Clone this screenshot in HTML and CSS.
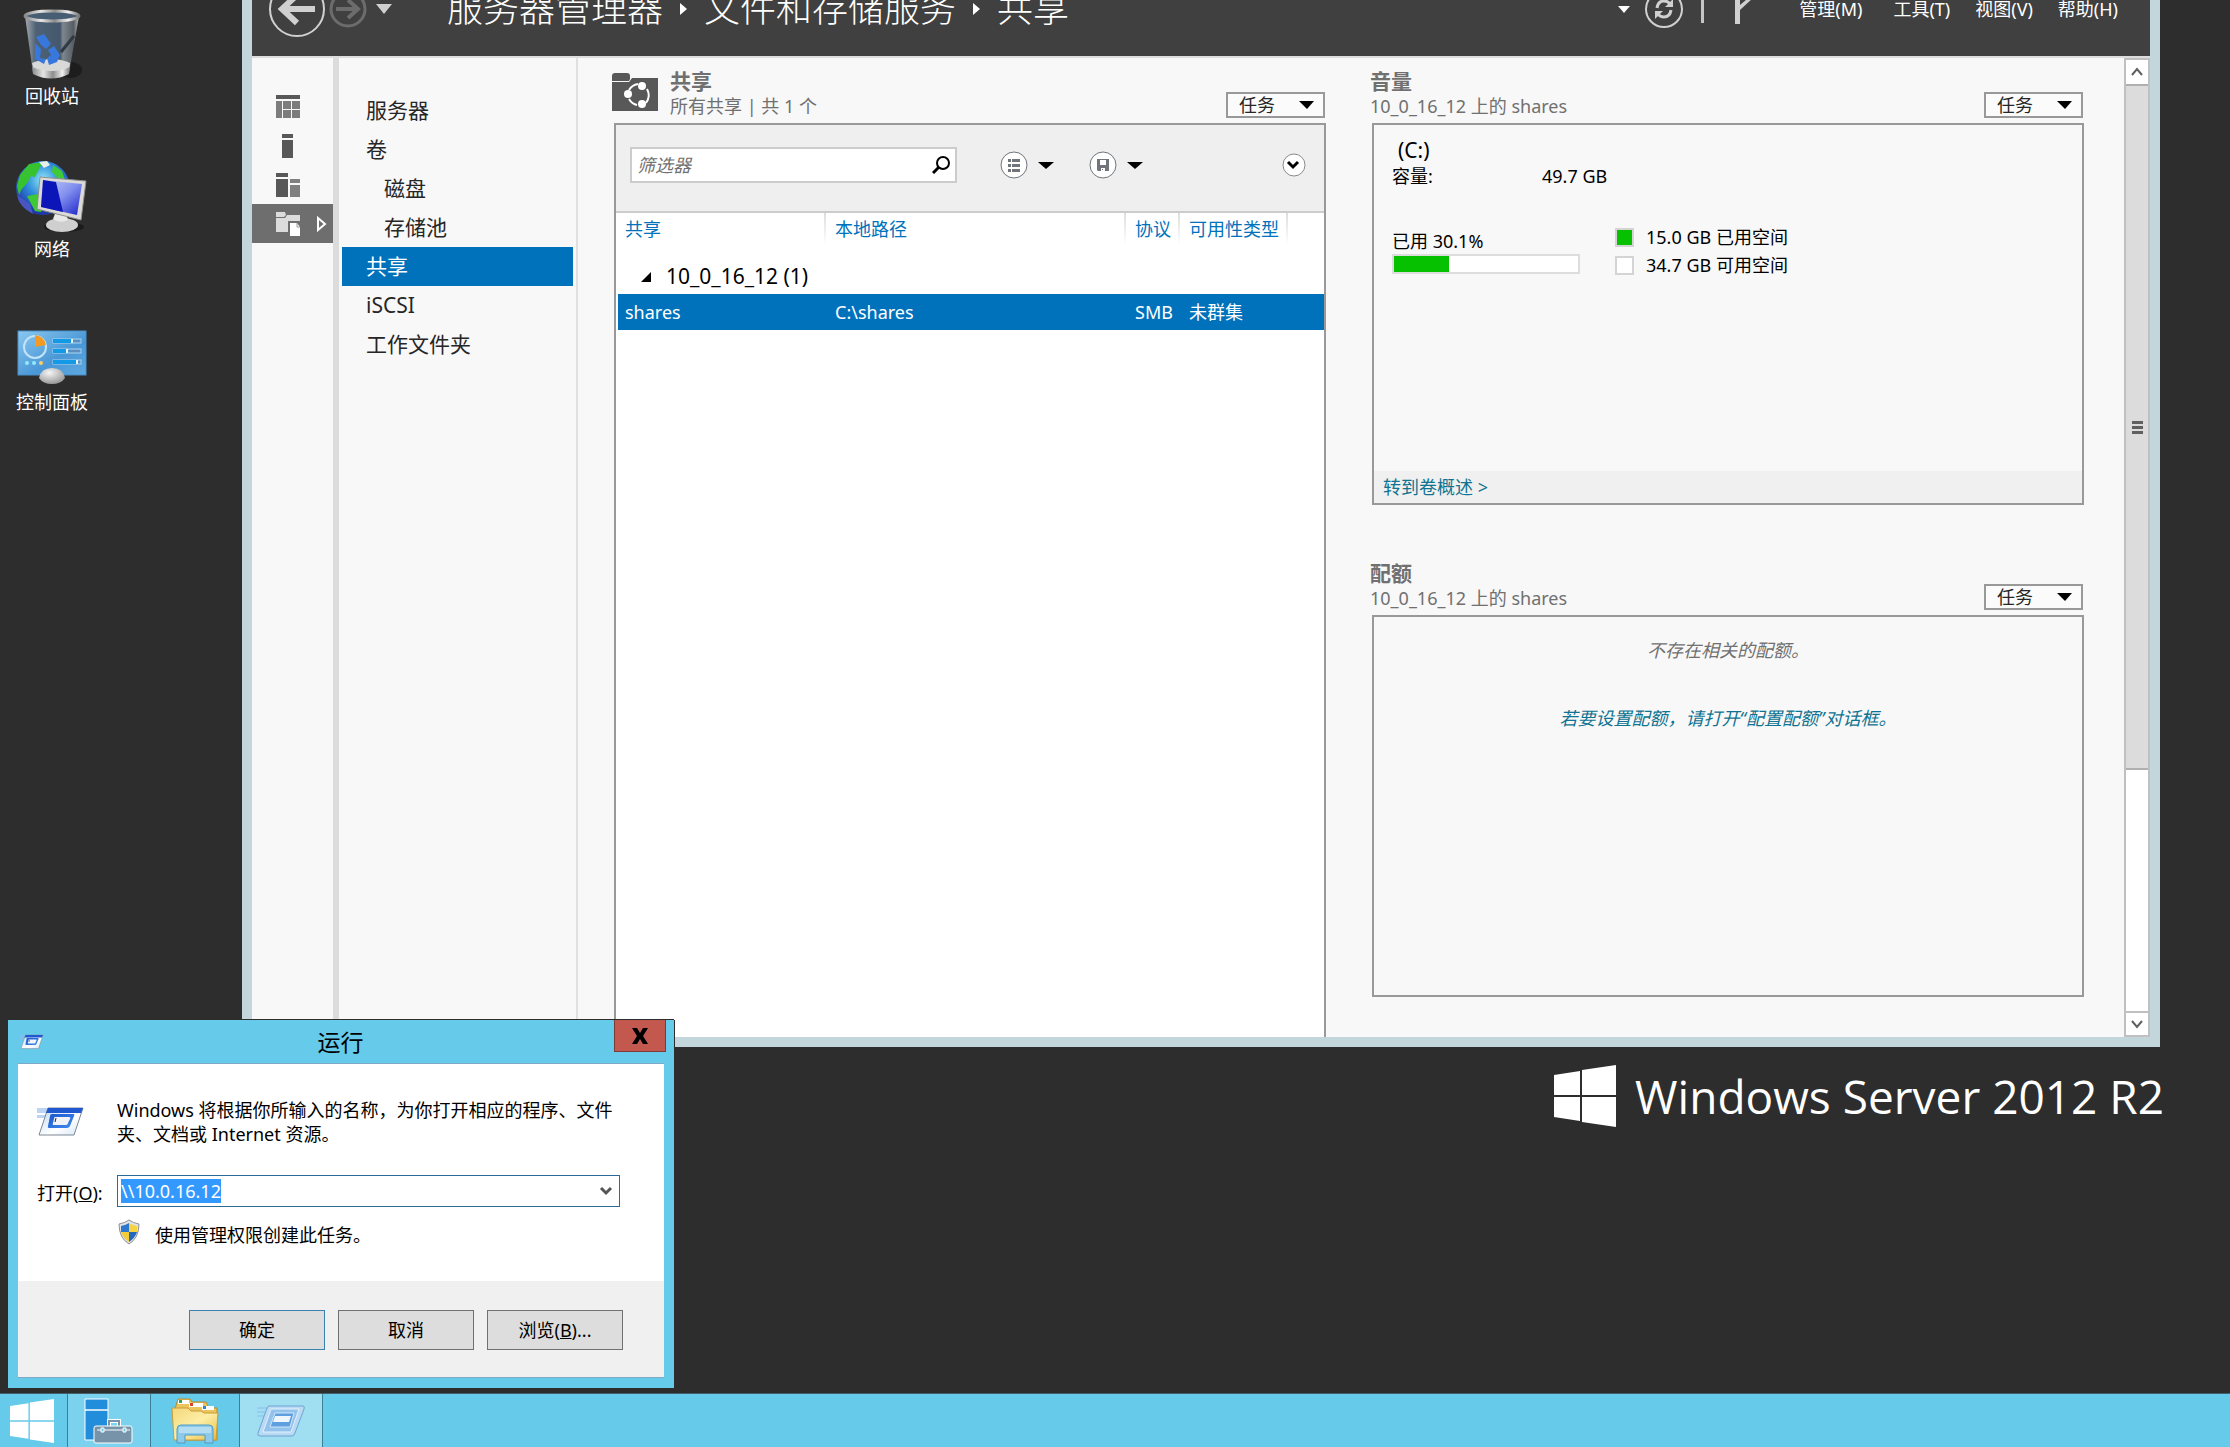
FILE: index.html
```html
<!DOCTYPE html>
<html lang="zh-CN">
<head>
    <meta charset="UTF-8">
    <meta name="viewport" content="width=device-width, initial-scale=1.0">
    <title>服务器管理器</title>
    <link rel="stylesheet" href="styles.css">
</head>
<body>
    <!-- Icons that are used more than once -->
    <svg class="defs" width="0" height="0">
        <defs>
            <linearGradient id="runBlue" x1="0" y1="0" x2="1" y2="1">
                <stop offset="0" stop-color="#1c56cc"/>
                <stop offset="1" stop-color="#3f8df0"/>
            </linearGradient>
            <linearGradient id="runPaper" x1="0" y1="0" x2="1" y2="1">
                <stop offset="0" stop-color="#b9d8f5"/>
                <stop offset="0.6" stop-color="#ffffff"/>
                <stop offset="1" stop-color="#cfe3f5"/>
            </linearGradient>
        </defs>
        <symbol id="icon-run" viewBox="0 0 48 30">
            <path d="M0 1h14l-2 5H0zM0 8h10l-1 3H0z" fill="#8fb9ec" opacity="0.6"/>
            <path d="M11 1h35l-9 27H2z" fill="url(#runPaper)" stroke="#7d8894" stroke-width="1"/>
            <path d="M11 1h35l-2 5H9z" fill="#2059cf"/>
            <path d="M15 7h21q2 0 1 2l-4 10q-1 2-3 2H13q-3 0-2-2l2-10q0-2 2-2z" fill="url(#runBlue)"/>
            <path d="M18 10h14q2 0 1 2l-2 4q0 2-2 2H17q-2 0-1-2l1-4q0-2 1-2z" fill="#f1f3f8"/>
            <path d="M19 11l-1 4" stroke="#222" stroke-width="1"/>
        </symbol>
        <symbol id="icon-flag" viewBox="0 0 62 62">
            <path d="M0 10L26 6v24H0zM28 5L62 0v30H28zM0 32h26v24L0 52zM28 32h34v30L28 57z"/>
        </symbol>
    </svg>

    <main class="desktop">
        <div class="shortcuts">
            <a href="#" class="shortcut">
                <svg width="64" height="72" viewBox="0 0 64 72">
                    <defs>
                        <linearGradient id="glass" x1="0" x2="1">
                            <stop offset="0" stop-color="#a5abb0"/>
                            <stop offset="0.2" stop-color="#4f6275"/>
                            <stop offset="0.65" stop-color="#44586d"/>
                            <stop offset="0.7" stop-color="#7e868e"/>
                            <stop offset="0.9" stop-color="#565d63"/>
                            <stop offset="1" stop-color="#b6b9bc"/>
                        </linearGradient>
                        <linearGradient id="metal" x1="0" x2="1">
                            <stop offset="0" stop-color="#8a8a8a"/>
                            <stop offset="0.3" stop-color="#e6e6e6"/>
                            <stop offset="0.55" stop-color="#8d8d8d"/>
                            <stop offset="0.8" stop-color="#f0f0f0"/>
                            <stop offset="1" stop-color="#777"/>
                        </linearGradient>
                    </defs>
                    <ellipse cx="50" cy="62" rx="12" ry="8" fill="#1d1d1d"/>
                    <path d="M5 8L13 65q18 9 36 0L59 8z" fill="url(#glass)"/>
                    <path d="M12 55q20-8 38 0l-1 8q-18 8-35 0z" fill="#d9d9d7"/>
                    <path d="M12 59l1 7q18 9 36 0l1-7q-18 8-38 0z" fill="url(#metal)"/>
                    <path d="M54 28L41 44" stroke="#313a44" stroke-width="3"/>
                    <path d="M16 29l8-3 7 10-5 5-5-4zM15 35l6 6-1 9 6 1-2 5-9-5zM28 42l6-4 6 9-3 7-8 3-2-7 4-3z" fill="#3878dd"/>
                    <ellipse cx="32" cy="8" rx="27" ry="5" fill="#465d73" stroke="url(#metal)" stroke-width="3"/>
                </svg>
                <span>回收站</span>
            </a>
            <a href="#" class="shortcut">
                <svg width="74" height="76" viewBox="0 0 74 76">
                    <defs>
                        <radialGradient id="globe" cx="0.5" cy="0.35" r="0.6">
                            <stop offset="0" stop-color="#8fe8f5"/>
                            <stop offset="0.5" stop-color="#2f8ddb"/>
                            <stop offset="1" stop-color="#1f3aa6"/>
                        </radialGradient>
                        <linearGradient id="screen" x1="0" y1="0" x2="1" y2="1">
                            <stop offset="0" stop-color="#c9d2fa"/>
                            <stop offset="0.5" stop-color="#8290ee"/>
                            <stop offset="1" stop-color="#1a22c8"/>
                        </linearGradient>
                    </defs>
                    <circle cx="28" cy="31" r="27" fill="url(#globe)"/>
                    <path d="M5 18l9-11 14-2-4 7-4 8-4-1-3 6-7 8-2 5-2-9z" fill="#37c22f"/>
                    <path d="M38 8l9 6 4 12-7-1-3-6-4-4zM12 39l11-2 5 8-2 10-6-1z" fill="#3fc935"/>
                    <path d="M24 5l8-1 3 4-6 3z" fill="#e8efe8"/>
                    <path d="M2 38q2 12 16 19l-3-10z" fill="#4a55c4"/>
                    <ellipse cx="49" cy="70" rx="20" ry="5" fill="#1b1b1b"/>
                    <ellipse cx="47" cy="68" rx="16" ry="7" fill="#cfcfcf"/>
                    <path d="M38 62l3-8 10 2 2 7q-8 4-15-1z" fill="#e8e8e8"/>
                    <path d="M25 20l46 4-5 39-44-11z" fill="#dcdad6" stroke="#8f8f8f" stroke-width="1"/>
                    <path d="M28 23l39 4-5 31-36-8z" fill="url(#screen)"/>
                    <path d="M28 23l13 2 7 30-22-5z" fill="#0c16b8"/>
                </svg>
                <span>网络</span>
            </a>
            <a href="#" class="shortcut">
                <svg width="70" height="56" viewBox="0 0 70 56">
                    <defs>
                        <linearGradient id="panelBlue" x1="0" y1="0" x2="1" y2="1">
                            <stop offset="0" stop-color="#8ac8f0"/>
                            <stop offset="0.6" stop-color="#4a97d6"/>
                            <stop offset="1" stop-color="#5ea9e0"/>
                        </linearGradient>
                        <radialGradient id="ball" cx="0.4" cy="0.3" r="0.8">
                            <stop offset="0" stop-color="#f6f6f6"/>
                            <stop offset="1" stop-color="#8b8b8b"/>
                        </radialGradient>
                    </defs>
                    <rect x="1" y="1" width="68" height="44" fill="url(#panelBlue)" stroke="#4a8fc7" stroke-width="1"/>
                    <circle cx="18" cy="17" r="11" fill="none" stroke="#c3e4f8" stroke-width="2"/>
                    <path d="M18 17V5a12 12 0 0 1 11 10z" fill="#f39a23"/>
                    <g fill="#5b8fc0" stroke="#a9d4f2" stroke-width="1">
                        <rect x="36" y="9" width="28" height="4"/>
                        <rect x="36" y="19" width="28" height="4"/>
                        <rect x="36" y="30" width="28" height="4"/>
                    </g>
                    <path d="M36 9h18v4H36zM36 19h13v4H36zM36 30h23v4H36z" fill="#139ae6"/>
                    <path d="M54 9h2v4h-2zM49 19h2v4h-2zM59 30h2v4h-2z" fill="#e8f5fd"/>
                    <circle cx="10" cy="33" r="2" fill="#8eeaff"/>
                    <circle cx="17" cy="33" r="2" fill="#8eeaff"/>
                    <circle cx="24" cy="33" r="2" fill="#ffcc66"/>
                    <path d="M22 48q2-10 13-10t13 10q-4 6-13 6t-13-6z" fill="url(#ball)"/>
                </svg>
                <span>控制面板</span>
            </a>
        </div>

        <div class="brand">
            <svg width="62" height="62" fill="#fff"><use href="#icon-flag"/></svg>
            <span>Windows Server 2012 R2</span>
        </div>

        <!-- Server Manager -->
        <section class="server-manager">
            <header class="topbar">
                <button class="icon-btn back" aria-label="后退">
                    <svg width="56" height="56" viewBox="0 0 56 56" fill="none" stroke="#d0d0d0">
                        <circle cx="28" cy="28" r="27" stroke-width="2"/>
                        <path d="M46 28H14M28 14L13 28l15 14" stroke-width="6"/>
                    </svg>
                </button>
                <button class="icon-btn forward" aria-label="前进">
                    <svg width="38" height="38" viewBox="0 0 38 38" fill="none" stroke="#6c6c6c">
                        <circle cx="19" cy="19" r="17" stroke-width="3"/>
                        <path d="M7 19h22M19 10l10 9-10 9" stroke-width="4"/>
                    </svg>
                </button>
                <button class="icon-btn" aria-label="历史记录">
                    <svg width="16" height="10" viewBox="0 0 16 10" fill="#d0d0d0"><path d="M0 0h16L8 10z"/></svg>
                </button>
                <nav class="breadcrumb">
                    <span>服务器管理器</span>
                    <svg width="7" height="12" viewBox="0 0 7 12" fill="#fff"><path d="M0 0l7 6-7 6z"/></svg>
                    <span>文件和存储服务</span>
                    <svg width="7" height="12" viewBox="0 0 7 12" fill="#fff"><path d="M0 0l7 6-7 6z"/></svg>
                    <span>共享</span>
                </nav>
                <div class="topbar-tools">
                    <button class="icon-btn" aria-label="更多">
                        <svg width="12" height="7" viewBox="0 0 12 7" fill="#fff"><path d="M0 0h12L6 7z"/></svg>
                    </button>
                    <button class="icon-btn refresh" aria-label="刷新">
                        <svg width="38" height="38" viewBox="0 0 38 38" fill="none" stroke="#d0d0d0">
                            <circle cx="19" cy="19" r="18" stroke-width="2"/>
                            <path d="M12 18q1-7 7-7 4 0 6 3M26 20q-1 7-7 7-4 0-6-3" stroke-width="3"/>
                            <path d="M28 9v8h-8zM10 29v-8h8z" fill="#d0d0d0" stroke="none"/>
                        </svg>
                    </button>
                    <span class="divider"></span>
                    <button class="icon-btn flag" aria-label="通知">
                        <svg width="18" height="34" viewBox="0 0 18 34" fill="#d0d0d0"><path d="M0 0h5v32H0z"/><path d="M18 2v4L5 18v-5z"/></svg>
                    </button>
                </div>
                <nav class="menu">
                    <a href="#">管理(M)</a>
                    <a href="#">工具(T)</a>
                    <a href="#">视图(V)</a>
                    <a href="#">帮助(H)</a>
                </nav>
            </header>

            <div class="workspace">
                <nav class="rail">
                    <a href="#" aria-label="仪表板">
                        <svg width="24" height="24" viewBox="0 0 24 24" fill="#7c7c7c">
                            <path d="M0 0h24v4H0z" fill="#585858"/>
                            <path d="M0 6h6v17H0zM7 6h8v8H7zM16 6h8v8h-8zM7 15h8v8H7zM16 15h8v8h-8z"/>
                        </svg>
                    </a>
                    <a href="#" aria-label="本地服务器">
                        <svg width="24" height="24" viewBox="0 0 24 24" fill="#585858"><path d="M6 0h11v4H6zM6 6h11v18H6z"/></svg>
                    </a>
                    <a href="#" aria-label="所有服务器">
                        <svg width="24" height="24" viewBox="0 0 24 24" fill="#585858">
                            <path d="M0 0h12v4H0zM0 6h12v18H0z"/>
                            <path d="M14 6h10v4H14zM14 12h10v12H14z" fill="#808080"/>
                        </svg>
                    </a>
                    <a href="#" class="active" aria-label="文件和存储服务">
                        <svg width="24" height="24" viewBox="0 0 24 24" fill="#dcdcdc">
                            <path d="M0 0h9l1 3-2 2H0zM0 6h9l2-3h13v6H12v11H0z"/>
                            <path d="M14 11h7l3 4v9H14z" fill="#fff"/>
                            <path d="M21 11v4h3" fill="none" stroke="#999"/>
                        </svg>
                        <svg class="rail-arrow" width="10" height="16" viewBox="0 0 10 16" fill="none" stroke="#fff" stroke-width="2"><path d="M1 2v12l7-6z"/></svg>
                    </a>
                </nav>

                <nav class="side-nav">
                    <a href="#">服务器</a>
                    <a href="#">卷</a>
                    <a href="#" class="sub">磁盘</a>
                    <a href="#" class="sub">存储池</a>
                    <a href="#" class="active">共享</a>
                    <a href="#">iSCSI</a>
                    <a href="#">工作文件夹</a>
                </nav>

                <div class="tiles">
                    <div class="tile shares-tile">
                        <div class="tile-head">
                            <svg class="tile-icon" width="46" height="38" viewBox="0 0 46 38">
                                <path d="M0 3q0-3 3-3h12q3 0 3 3v3l-1 2H0z" fill="#585858"/>
                                <path d="M0 9h17l3-4h26v33H0z" fill="#585858"/>
                                <path d="M17 17q3-5 9-6M35 16q4 7-1 14M17 26q3 5 8 6" fill="none" stroke="#fff" stroke-width="2"/>
                                <circle cx="30" cy="13" r="4" fill="#fff"/>
                                <circle cx="16" cy="21" r="4" fill="#fff"/>
                                <circle cx="30" cy="31" r="4" fill="#fff"/>
                            </svg>
                            <div class="tile-title">
                                <h2>共享</h2>
                                <p>所有共享 | 共 1 个</p>
                            </div>
                            <button class="task-btn">任务 <svg width="15" height="8" viewBox="0 0 15 8"><path d="M0 0h15L8 8z"/></svg></button>
                        </div>
                        <div class="box open-box">
                            <div class="toolbar">
                                <div class="filter">
                                    <input type="text" placeholder="筛选器" aria-label="筛选器">
                                    <svg width="18" height="18" viewBox="0 0 18 18" fill="none" stroke="#000"><circle cx="11" cy="7" r="6" stroke-width="2"/><path d="M7 11l-6 6" stroke-width="3"/></svg>
                                </div>
                                <button class="drop-btn" aria-label="列表">
                                    <svg width="28" height="28" viewBox="0 0 28 28"><circle cx="14" cy="14" r="13" fill="#fff" stroke="#70757c" stroke-width="1"/><path d="M8 8h3v3H8zM12 8h8v3h-8zM8 13h3v3H8zM12 13h8v3h-8zM8 18h3v3H8zM12 18h8v3h-8z" fill="#70757c"/></svg>
                                    <svg width="16" height="7" viewBox="0 0 16 7"><path d="M0 0h16L8 7z"/></svg>
                                </button>
                                <button class="drop-btn" aria-label="保存">
                                    <svg width="28" height="28" viewBox="0 0 28 28"><circle cx="14" cy="14" r="13" fill="#fff" stroke="#70757c" stroke-width="1"/><path d="M8 8h12v12H9l-1-1z" fill="#70757c"/><path d="M11 9h6v5h-6zM12 17h4v3h-4z" fill="#fff"/><path d="M13 18h1v1h-1z" fill="#70757c"/></svg>
                                    <svg width="16" height="7" viewBox="0 0 16 7"><path d="M0 0h16L8 7z"/></svg>
                                </button>
                                <button class="icon-btn expand" aria-label="展开">
                                    <svg width="24" height="24" viewBox="0 0 24 24"><circle cx="12" cy="12" r="11" fill="#fff" stroke="#8a8a8a" stroke-width="1"/><path d="M6 9l5 5 5-5" fill="none" stroke="#000" stroke-width="3"/></svg>
                                </button>
                            </div>
                            <table class="share-table">
                                <colgroup>
                                    <col class="col-share">
                                    <col class="col-path">
                                    <col class="col-proto">
                                    <col class="col-type">
                                    <col>
                                </colgroup>
                                <thead>
                                    <tr>
                                        <th>共享</th>
                                        <th>本地路径</th>
                                        <th>协议</th>
                                        <th>可用性类型</th>
                                        <th></th>
                                    </tr>
                                </thead>
                                <tbody>
                                    <tr class="group">
                                        <td colspan="5"><svg width="10" height="10" viewBox="0 0 10 10"><path d="M10 0v10H0z"/></svg>10_0_16_12 (1)</td>
                                    </tr>
                                    <tr class="selected">
                                        <td>shares</td>
                                        <td>C:\shares</td>
                                        <td>SMB</td>
                                        <td>未群集</td>
                                        <td></td>
                                    </tr>
                                </tbody>
                            </table>
                        </div>
                    </div>

                    <div class="tile-column">
                        <div class="tile">
                            <div class="tile-head">
                                <div class="tile-title">
                                    <h2>音量</h2>
                                    <p>10_0_16_12 上的 shares</p>
                                </div>
                                <button class="task-btn">任务 <svg width="15" height="8" viewBox="0 0 15 8"><path d="M0 0h15L8 8z"/></svg></button>
                            </div>
                            <div class="box volume-box">
                                <div class="volume">
                                    <h3>(C:)</h3>
                                    <dl>
                                        <dt>容量:</dt>
                                        <dd>49.7 GB</dd>
                                    </dl>
                                    <div class="usage">
                                        <div class="used">
                                            <span>已用 30.1%</span>
                                            <div class="bar"><div class="bar-fill" style="width: 30.1%"></div></div>
                                        </div>
                                        <ul class="legend">
                                            <li class="full">15.0 GB 已用空间</li>
                                            <li>34.7 GB 可用空间</li>
                                        </ul>
                                    </div>
                                </div>
                                <div class="box-foot"><a href="#">转到卷概述 &gt;</a></div>
                            </div>
                        </div>

                        <div class="tile">
                            <div class="tile-head">
                                <div class="tile-title">
                                    <h2>配额</h2>
                                    <p>10_0_16_12 上的 shares</p>
                                </div>
                                <button class="task-btn">任务 <svg width="15" height="8" viewBox="0 0 15 8"><path d="M0 0h15L8 8z"/></svg></button>
                            </div>
                            <div class="box quota-box">
                                <p>不存在相关的配额。</p>
                                <a href="#">若要设置配额，请打开“配置配额”对话框。</a>
                            </div>
                        </div>
                    </div>
                </div>

                <div class="scrollbar">
                    <button aria-label="向上滚动"><svg width="12" height="10" viewBox="0 0 12 10" fill="none" stroke="#606060" stroke-width="2"><path d="M1 8l5-6 5 6"/></svg></button>
                    <div class="thumb"><span></span><span></span><span></span></div>
                    <div class="track"></div>
                    <button aria-label="向下滚动"><svg width="12" height="10" viewBox="0 0 12 10" fill="none" stroke="#606060" stroke-width="2"><path d="M1 2l5 6 5-6"/></svg></button>
                </div>
            </div>
        </section>

        <!-- Run dialog -->
        <form class="run-dialog">
            <div class="run-title">
                <svg width="24" height="16"><use href="#icon-run"/></svg>
                <h1>运行</h1>
                <button type="button" class="close" aria-label="关闭">
                    <svg width="18" height="16" viewBox="0 0 18 16"><path d="M1 0h5l3 5 3-5h5l-5 8 5 8h-5l-3-5-3 5H1l5-8z"/></svg>
                </button>
            </div>
            <div class="run-body">
                <svg class="run-icon" width="48" height="30"><use href="#icon-run"/></svg>
                <p>Windows 将根据你所输入的名称，为你打开相应的程序、文件夹、文档或 Internet 资源。</p>
                <label for="runInput">打开(<u>O</u>):</label>
                <div class="combo">
                    <input type="text" id="runInput" value="\\10.0.16.12" autocomplete="off" spellcheck="false">
                    <button type="button" aria-label="展开列表"><svg width="14" height="10" viewBox="0 0 14 10" fill="none" stroke="#555" stroke-width="3"><path d="M2 2l5 5 5-5"/></svg></button>
                </div>
                <div class="admin-note">
                    <svg width="22" height="26" viewBox="0 0 22 26">
                        <path d="M11 1q4 3 10 4 0 14-10 20Q1 19 1 5q6-1 10-4z" fill="#dfe3e6" stroke="#8c9196" stroke-width="1"/>
                        <path d="M11 4v9H3q0-3 0-6 5-1 8-3z" fill="#2d78cc"/>
                        <path d="M11 4q3 2 8 3 0 3 0 6h-8z" fill="#f6d343"/>
                        <path d="M3 13h8v10q-6-4-8-10z" fill="#f3cc38"/>
                        <path d="M19 13h-8v10q6-4 8-10z" fill="#2468bd"/>
                    </svg>
                    <span>使用管理权限创建此任务。</span>
                </div>
            </div>
            <div class="run-actions">
                <button type="button" class="default">确定</button>
                <button type="button">取消</button>
                <button type="button">浏览(<u>B</u>)...</button>
            </div>
        </form>
    </main>

    <footer class="taskbar">
        <button class="start" aria-label="开始">
            <svg width="44" height="44" fill="#fff"><use href="#icon-flag"/></svg>
        </button>
        <button class="running" aria-label="服务器管理器">
            <svg width="50" height="46" viewBox="0 0 50 46">
                <path d="M1 1h23v11H1zM1 12h23v30H1z" fill="#218ddb" stroke="#fff" stroke-width="1"/>
                <path d="M25 28v-5h10v5" fill="none" stroke="#fff" stroke-width="4"/>
                <path d="M25 28v-5h10v5" fill="none" stroke="#7793a9" stroke-width="2"/>
                <rect x="10" y="28" width="38" height="17" rx="2" fill="#7793a9" stroke="#fff"/>
                <path d="M13 32h33" stroke="#fff"/>
                <path d="M17 30h3v4h-3zM39 30h3v4h-3z" fill="#6bcbe9" stroke="#fff" stroke-width="1"/>
            </svg>
        </button>
        <button class="explorer" aria-label="文件资源管理器">
            <svg width="50" height="48" viewBox="0 0 50 48">
                <defs>
                    <linearGradient id="folder" x1="0" y1="0" x2="1" y2="1">
                        <stop offset="0" stop-color="#f3d77a"/>
                        <stop offset="0.5" stop-color="#fdeea6"/>
                        <stop offset="1" stop-color="#e8bd45"/>
                    </linearGradient>
                </defs>
                <path d="M5 12l3-10h12l2 3h14l3 6h8v32H6z" fill="#ecc45c" stroke="#b98b2c" stroke-width="1"/>
                <path d="M8 3h11v4H8zM19 6h14v4H19zM32 9h12v4H32z" fill="#fff"/>
                <path d="M9 3h3v3H9z" fill="#3aa24a"/>
                <path d="M20 6h3v3h-3z" fill="#d8442b"/>
                <path d="M33 9h3v3h-3z" fill="#2d85d0"/>
                <path d="M2 11h16l3 3h10l3 2h14l-2 27H4z" fill="url(#folder)" stroke="#c99c38" stroke-width="1"/>
                <path d="M7 46V32q0-4 4-4h28q4 0 4 4v14h-8v-8H15v8z" fill="#8cc9ea" stroke="#4f9cc4" stroke-width="1"/>
                <path d="M9 30h32v6H9z" fill="#c4e6f5" opacity="0.7"/>
            </svg>
        </button>
        <button class="current" aria-label="运行">
            <svg width="48" height="34" viewBox="0 0 48 34">
                <path d="M0 4h10M0 8h8M0 12h7" stroke="#8fbde8"/>
                <path d="M12 2h34q2 0 1 3l-9 24q-1 3-3 3H3q-3 0-2-3L10 4q1-2 2-2z" fill="#b9daf4" stroke="#6fa3cf" stroke-width="1"/>
                <path d="M14 5h28l-8 23H6z" fill="#93c3ec" stroke="#e2f1fb" stroke-width="1"/>
                <path d="M18 9h19l-4 14H13z" fill="#5e9fdf" stroke="#cfe6f8" stroke-width="1"/>
                <path d="M18 12h16l-2 6H16z" fill="#eef5fb"/>
            </svg>
        </button>
    </footer>

    <script>
        const runInput = document.getElementById("runInput");
        runInput.focus();
        runInput.select();
    </script>
</body>
</html>
```

FILE: styles.css
```css
* {
    margin: 0;
    padding: 0;
    box-sizing: border-box;
}
body {
    font-family: "Noto Sans", "Noto Sans CJK SC", sans-serif;
    font-size: 18px;
    line-height: 24px;
    color: #000;
    background-color: #2d2d2d;
    display: flex;
    flex-direction: column;
    min-height: 100vh;
}
a {
    color: inherit;
    text-decoration: none;
}
button, input {
    font: inherit;
    color: inherit;
    border: none;
    background: none;
    outline: none;
}
button {
    cursor: pointer;
}
svg {
    display: block;
    flex: none;
}
.defs {
    position: absolute;
}
.icon-btn {
    display: flex;
}

/* Desktop */
.desktop {
    position: relative;
    flex: 1;
    overflow: hidden;
}
.shortcuts {
    display: flex;
    flex-direction: column;
    width: 104px;
    padding-top: 8px;
}
.shortcut {
    display: flex;
    flex-direction: column;
    align-items: center;
    justify-content: flex-end;
    gap: 4px;
    height: 153px;
    color: #fff;
}
.shortcut:first-child {
    height: 100px;
}
.brand {
    position: absolute;
    right: 66px;
    bottom: 265px;
    display: flex;
    align-items: center;
    gap: 19px;
    font-family: "Open Sans", sans-serif;
    font-size: 46px;
    line-height: 64px;
    color: #fff;
}

/* Server Manager window */
.server-manager {
    position: absolute;
    top: -38px;
    right: 70px;
    bottom: 346px;
    left: 242px;
    display: flex;
    flex-direction: column;
    border: 10px solid #c3d6dc;
    background-color: #f8f8f8;
}
.topbar {
    display: flex;
    align-items: center;
    height: 86px;
    flex: none;
    padding: 0 32px 10px 17px;
    background-color: #404040;
    border-bottom: 2px solid #ddd;
    color: #fff;
}
.back {
    margin-right: 4px;
}
.forward {
    margin-right: 9px;
}
.breadcrumb {
    display: flex;
    align-items: center;
    gap: 17px;
    margin-left: 55px;
    font-size: 36px;
    font-weight: 300;
    line-height: 48px;
    white-space: nowrap;
}
.topbar-tools {
    display: flex;
    align-items: center;
    margin-left: auto;
}
.refresh {
    margin: 0 18px 0 15px;
}
.divider {
    width: 3px;
    height: 28px;
    background-color: #c4c4c4;
}
.flag {
    margin: 0 46px 0 31px;
}
.menu {
    display: flex;
    gap: 25px;
}
.menu a:first-child {
    margin-right: 6px;
}
.workspace {
    flex: 1;
    display: flex;
    min-height: 0;
}

/* Navigation */
.rail {
    width: 87px;
    flex: none;
    padding-top: 29px;
    border-right: 6px solid #dcdcdc;
}
.rail a {
    display: flex;
    align-items: center;
    gap: 17px;
    height: 39px;
    padding-left: 24px;
}
.rail .active {
    background-color: #6e6e6e;
}
.side-nav {
    width: 239px;
    flex: none;
    padding: 33px 3px 0;
    border-right: 2px solid #e0e0e0;
    font-size: 21px;
    line-height: 39px;
    color: #262626;
}
.side-nav a {
    display: block;
    padding-left: 24px;
}
.side-nav .sub {
    padding-left: 42px;
}
.side-nav .active {
    background-color: #0072bc;
    color: #fff;
}

/* Tiles */
.tiles {
    flex: 1;
    display: grid;
    grid-template-columns: 1fr 1fr;
    gap: 46px;
    padding: 0 40px 0 36px;
}
.tile-column {
    display: flex;
    flex-direction: column;
    gap: 45px;
}
.shares-tile {
    display: flex;
    flex-direction: column;
}
.tile-head {
    display: flex;
    align-items: flex-end;
    height: 65px;
    margin-left: -2px;
    padding-bottom: 5px;
    color: #707070;
}
.tile-icon {
    margin: 0 12px 7px 0;
}
.tile-title h2 {
    font-size: 21px;
    line-height: 25px;
}
.task-btn {
    display: flex;
    align-items: center;
    justify-content: space-between;
    width: 99px;
    height: 26px;
    margin: 0 1px 0 auto;
    padding: 0 9px 0 11px;
    border: 2px solid #999;
    background-color: #fbfbfb;
    color: #262626;
    line-height: 20px;
}
.box {
    border: 2px solid #999;
}
.open-box {
    flex: 1;
    border-bottom: none;
    background-color: #fff;
}
.toolbar {
    display: flex;
    align-items: center;
    height: 88px;
    padding: 0 18px 6px 14px;
    background-color: #efefef;
    border-bottom: 2px solid #ccc;
}
.filter {
    display: flex;
    align-items: center;
    width: 327px;
    height: 36px;
    margin-right: 43px;
    padding: 0 5px 0 5px;
    border: 2px solid #ccc;
    background-color: #fff;
}
.filter input {
    flex: 1;
    min-width: 0;
}
.filter input::placeholder {
    color: #707070;
    font-style: italic;
}
.drop-btn {
    display: flex;
    align-items: center;
    gap: 10px;
    margin-right: 35px;
}
.expand {
    margin-left: auto;
}
.share-table {
    width: 100%;
    table-layout: fixed;
    border-collapse: collapse;
    border-left: 2px solid #fff;
}
.col-share {
    width: 209px;
}
.col-path {
    width: 300px;
}
.col-proto {
    width: 54px;
}
.col-type {
    width: 108px;
}
.share-table th, .share-table td {
    padding-left: 9px;
    text-align: left;
    white-space: nowrap;
}
.share-table th:first-child, .share-table td:first-child {
    padding-left: 7px;
}
.share-table th {
    height: 32px;
    color: #0072bc;
    font-weight: 400;
    background: linear-gradient(#ddd, #fff) no-repeat right / 2px 100%;
}
.share-table th:last-child {
    background: none;
}
.share-table .group td {
    height: 49px;
    padding: 12px 0 0 23px;
    font-size: 21px;
}
.group svg {
    display: inline-block;
    margin-right: 15px;
    vertical-align: 2px;
}
.share-table .selected td {
    height: 36px;
    background-color: #0072bc;
    color: #fff;
}

/* Volume */
.volume-box {
    display: flex;
    flex-direction: column;
    height: 382px;
}
.volume {
    padding: 12px 18px;
    line-height: 26px;
}
.volume h3 {
    padding-left: 6px;
    font-size: 21px;
    font-weight: 400;
}
.volume dl {
    display: grid;
    grid-template-columns: 150px 1fr;
}
.usage {
    display: flex;
    gap: 35px;
    margin-top: 34px;
}
.used {
    width: 188px;
    padding-top: 5px;
}
.bar {
    height: 20px;
    border: 2px solid #ddd;
    background-color: #fff;
}
.bar-fill {
    height: 100%;
    background-color: #06c100;
}
.legend {
    list-style: none;
    line-height: 28px;
}
.legend li {
    display: flex;
    align-items: center;
    gap: 12px;
}
.legend li::before {
    content: "";
    width: 15px;
    height: 15px;
    border: 2px solid #d4d4d4;
    background-color: #fff;
}
.legend .full::before {
    background-color: #06c100;
}
.box-foot {
    margin-top: auto;
    padding: 4px 9px;
    background-color: #f0f0f0;
    color: #0f7391;
}

/* Quota */
.quota-box {
    display: flex;
    flex-direction: column;
    align-items: center;
    gap: 44px;
    height: 382px;
    padding-top: 21px;
    font-style: italic;
    color: #707070;
}
.quota-box a {
    color: #0f7391;
}

/* Scrollbar */
.scrollbar {
    display: flex;
    flex-direction: column;
    width: 26px;
    flex: none;
    border: 2px solid #c0c0c0;
    background-color: #fff;
}
.scrollbar button {
    display: flex;
    align-items: center;
    justify-content: center;
    height: 24px;
    flex: none;
}
.scrollbar button:last-child {
    border-top: 2px solid #c0c0c0;
}
.thumb {
    flex: 17;
    display: flex;
    flex-direction: column;
    align-items: center;
    justify-content: center;
    gap: 2px;
    border: solid #b0b0b0;
    border-width: 2px 0;
    background-color: #dcdcdc;
}
.thumb span {
    width: 11px;
    height: 3px;
    background-color: #606060;
}
.track {
    flex: 6;
}

/* Run dialog */
.run-dialog {
    position: absolute;
    left: 8px;
    bottom: 5px;
    width: 666px;
    padding: 0 10px 10px;
    background-color: #66caea;
    box-shadow: 0 -1px #2d2d2d, 1px 0 #2d2d2d;
}
.run-title {
    display: grid;
    grid-template-columns: 47px 1fr 52px;
    align-items: center;
    height: 43px;
    margin-right: -2px;
    padding-left: 2px;
}
.run-title h1 {
    font-size: 23px;
    font-weight: 400;
    text-align: center;
}
.close {
    display: flex;
    align-items: center;
    justify-content: center;
    align-self: start;
    height: 32px;
    border: 1px solid #7d3a36;
    border-top: none;
    background-color: #c3584f;
}
.run-body {
    display: grid;
    grid-template-columns: 80px 1fr;
    padding: 34px 44px 34px 19px;
    border-top: 1px solid #7fa9c6;
    background-color: #fff;
}
.run-icon {
    margin-top: 9px;
}
.run-body label {
    margin-top: 35px;
}
.combo {
    display: flex;
    height: 32px;
    margin-top: 29px;
    padding: 3px;
    border: 1px solid #2a6a96;
}
.combo input {
    flex: 1;
    min-width: 0;
}
.combo input::selection {
    background-color: #3399ff;
    color: #fff;
}
.combo button {
    display: flex;
    align-items: center;
    padding: 0 3px;
}
.admin-note {
    grid-column: 2;
    display: flex;
    align-items: center;
    gap: 15px;
    margin-top: 9px;
    padding-left: 1px;
}
.admin-note span {
    padding-top: 7px;
}
.run-actions {
    display: flex;
    justify-content: flex-end;
    gap: 13px;
    padding: 29px 41px 27px;
    border-bottom: 1px solid #7fa9c6;
    background-color: #f0f0f0;
}
.run-actions button {
    width: 136px;
    height: 40px;
    border: 1px solid #707070;
    background-color: #ddd;
}
.run-actions .default {
    border-color: #3c7fb1;
}

/* Taskbar */
.taskbar {
    display: flex;
    height: 54px;
    flex: none;
    border-top: 1px solid #44606c;
    background-color: #66caea;
}
.taskbar button {
    display: flex;
    align-items: center;
    justify-content: center;
    width: 83px;
    border-right: 1px solid #3f7f94;
}
.taskbar .start {
    width: 68px;
    padding-right: 4px;
}
.taskbar .running {
    background-color: #7ad2ee;
}
.taskbar .explorer {
    width: 89px;
}
.taskbar .current {
    background-color: #a0def2;
}
```
